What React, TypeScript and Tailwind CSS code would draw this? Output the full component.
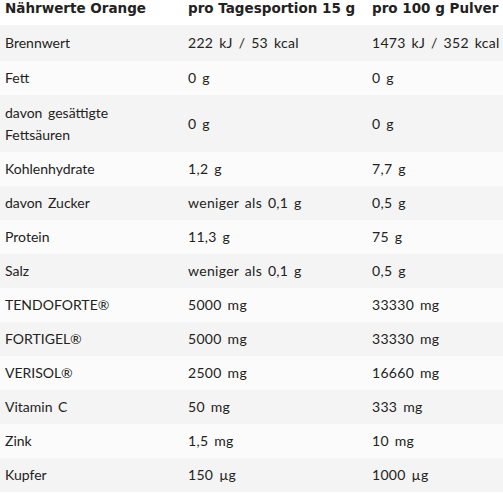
const rows: [string, string, string, number][] = [
  ["Brennwert", "222 kJ / 53 kcal", "1473 kJ / 352 kcal", 36],
  ["Fett", "0 g", "0 g", 34],
  ["davon gesättigte Fettsäuren", "0 g", "0 g", 57],
  ["Kohlenhydrate", "1,2 g", "7,7 g", 34],
  ["davon Zucker", "weniger als 0,1 g", "0,5 g", 34],
  ["Protein", "11,3 g", "75 g", 34],
  ["Salz", "weniger als 0,1 g", "0,5 g", 34],
  ["TENDOFORTE®", "5000 mg", "33330 mg", 34],
  ["FORTIGEL®", "5000 mg", "33330 mg", 34],
  ["VERISOL®", "2500 mg", "16660 mg", 34],
  ["Vitamin C", "50 mg", "333 mg", 34],
  ["Zink", "1,5 mg", "10 mg", 34],
  ["Kupfer", "150 µg", "1000 µg", 34],
];

export default function App() {
  return (
    <div className="w-[503px] h-[493px] overflow-hidden bg-white text-[#222] font-['Lato',_sans-serif]">
      <div className="grid grid-cols-[183px_184px_1fr] h-[25px] text-[13.5px] font-bold leading-[16px] font-['DejaVu_Sans',_sans-serif]">
        <div className="pl-[5px]">Nährwerte Orange</div>
        <div className="pl-[5px] whitespace-nowrap">pro Tagesportion 15 g</div>
        <div className="pl-[5px] whitespace-nowrap">pro 100 g Pulver</div>
      </div>
      {rows.map(([name, day, per100, h], i) => (
        <div
          key={i}
          className={`grid grid-cols-[183px_184px_1fr] items-center text-[14px] leading-[22px] [word-spacing:2px] ${i % 2 === 0 ? "bg-[#f4f4f4]" : "bg-[#fbfbfb]"}`}
          style={{ height: h }}
        >
          <div className="pl-[5px] pr-[40px]">{name}</div>
          <div className="pl-[5px] tracking-[0.3px]">{day}</div>
          <div className="pl-[5px] whitespace-nowrap tracking-[0.3px]">{per100}</div>
        </div>
      ))}
    </div>
  );
}
